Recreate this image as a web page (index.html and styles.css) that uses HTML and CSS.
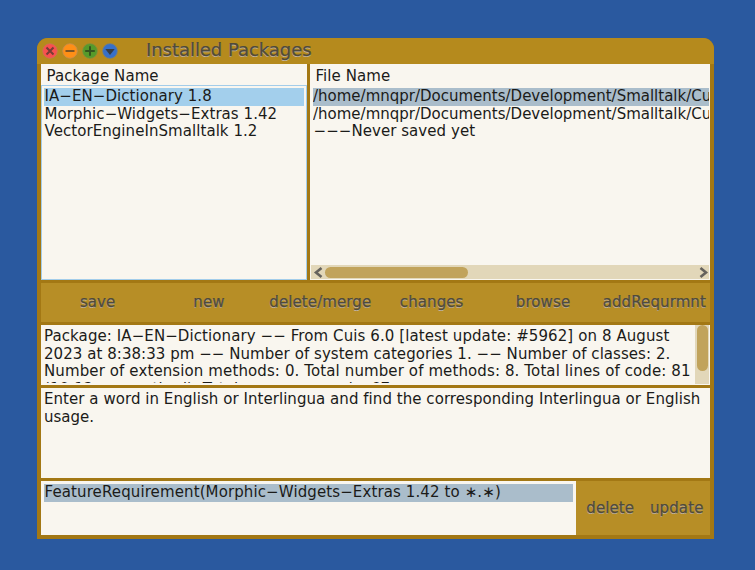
FILE: index.html
```html
<!DOCTYPE html>
<html lang="en">
<head>
<meta charset="utf-8">
<title>Installed Packages</title>
<link rel="stylesheet" href="styles.css">
</head>
<body>
<main class="window">
  <header class="titlebar">
    <div class="controls">
      <svg viewBox="0 0 16 16"><circle cx="8" cy="8" r="7.3" fill="#f9504f" stroke="#c47a50" stroke-width=".8"/><path d="M4.500 4.500l7 7M11.500 4.500l-7 7" stroke="#773c35" stroke-width="2"/></svg>
      <svg viewBox="0 0 16 16"><circle cx="8" cy="8" r="7.300" fill="#ff8f16" stroke="#c48e50" stroke-width=".8"/><path d="M3.500 8h9" stroke="#7c5425" stroke-width="2"/></svg>
      <svg viewBox="0 0 16 16"><circle cx="8" cy="8" r="7.300" fill="#559a2a" stroke="#7b9040" stroke-width=".8"/><path d="M3.200 8h9.600M8 3.200v9.600" stroke="#34551f" stroke-width="2"/></svg>
      <svg viewBox="0 0 16 16"><circle cx="8" cy="8" r="7.300" fill="#3770c8" stroke="#6b7e90" stroke-width=".8"/><path d="M3.300 6h9.400L8 12z" fill="#343d49"/></svg>
    </div>
    <h1 class="title">Installed Packages</h1>
  </header>
  <section class="lists">
    <div class="column names">
      <h2 class="heading">Package Name</h2>
      <div class="rows framed">
        <div class="row active">IA−EN−Dictionary 1.8</div>
        <div class="row">Morphic−Widgets−Extras 1.42</div>
        <div class="row">VectorEngineInSmalltalk 1.2</div>
      </div>
    </div>
    <div class="column files">
      <h2 class="heading">File Name</h2>
      <div class="rows">
        <div class="row selected path">/home/mnqpr/Documents/Development/Smalltalk/Cu</div>
        <div class="row path">/home/mnqpr/Documents/Development/Smalltalk/Cu</div>
        <div class="row">−−−Never saved yet</div>
      </div>
      <div class="hscroll">
        <svg class="arrow" viewBox="0 0 14 14"><path d="M10.500 3L5 7.500l5.500 4.500" /></svg>
        <div class="hthumb"></div>
        <svg class="arrow end" viewBox="0 0 14 14"><path d="M5.500 3L11 7.500l-5.500 4.500" /></svg>
      </div>
    </div>
  </section>
  <nav class="buttons">
    <span>save</span><span>new</span><span>delete/merge</span><span>changes</span><span>browse</span><span>addRequrmnt</span>
  </nav>
  <section class="summary">
    <div class="text">
      <div class="medium">Package: IA−EN−Dictionary −− From Cuis 6.0 [latest update: #5962] on 8 August</div>
      <div class="tight">2023 at 8:38:33 pm −− Number of system categories 1. −− Number of classes: 2.</div>
      <div class="wide">Number of extension methods: 0. Total number of methods: 8. Total lines of code: 81</div>
      <div class="wide">(10.12 per method). Total message sends: 67</div>
    </div>
    <div class="vscroll"><div class="vthumb"></div></div>
  </section>
  <section class="description text">
    <div class="tight">Enter a word in English or Interlingua and find the corresponding Interlingua or English</div>
    <div>usage.</div>
  </section>
  <section class="footer">
    <div class="requirements"><div class="row selected wide">FeatureRequirement(Morphic−Widgets−Extras 1.42 to ∗.∗)</div></div>
    <div class="actions"><span>delete</span><span>update</span></div>
  </section>
</main>
</body>
</html>
```

FILE: styles.css
```css
* { box-sizing: border-box; }
body {
  margin: 0;
  height: 570px;
  padding: 38px 41px 0 37px;
  background: #2a599f;
  color: #1b1b19;
  font-family: "DejaVu Sans", sans-serif;
  font-size: 15px;
  font-variant-ligatures: none;
  overflow: hidden;
}
.window {
  width: 677px;
  height: 501px;
  display: flex;
  flex-direction: column;
  gap: 3px;
  padding: 0 4px 4px;
  background: #a37814;
  border-radius: 11px 11px 0 0;
  overflow: hidden;
}
.titlebar {
  height: 26px;
  margin: 0 -4px -3px;
  display: flex;
  flex: none;
  align-items: center;
  background: #b58a1d;
}
.controls { display: flex; gap: 4px; padding-left: 5px; }
.controls svg { width: 16px; height: 16px; display: block; }
.title {
  margin: -2px 0 0 28px;
  font-size: 18px;
  font-weight: 400;
  line-height: 24px;
  letter-spacing: -0.05px;
  white-space: nowrap;
}
.title, .buttons, .actions {
  color: #4f4a3c;
  -webkit-text-stroke: 0.25px #4f4a3c;
  text-shadow: 0 1px 0 #c4b6a0;
}
.lists { display: flex; gap: 3px; height: 216px; flex: none; }
.column { display: flex; flex-direction: column; background: #f9f6ef; overflow: hidden; }
.names { width: 266px; }
.files { width: 400px; padding-right: 1px; }
.heading {
  margin: 0;
  padding-left: 5.5px;
  height: 21px;
  flex: none;
  font-size: 15px;
  font-weight: 400;
  line-height: 24px;
  letter-spacing: 0.08px;
}
.rows { flex: 1; padding: 3px 3px 0 3px; }
.files .rows { padding: 3px 0 0 3px; }
.framed { border: 1px solid #a3cdea; padding: 2px 2px 0; }
.row { height: 17.6px; line-height: 17px; white-space: nowrap; overflow: hidden; padding-left: 0.5px; letter-spacing: 0.06px; }
.files .path { padding-left: 0; letter-spacing: 0; }
.active { background: #a3cfec; }
.selected { background: #aabdcb; }
.hscroll { display: flex; height: 14px; margin: 0 0 1px 1px; background: #e2d7b9; }
.arrow { width: 14px; height: 14px; flex: none; }
.arrow path { fill: none; stroke: #65625d; stroke-width: 2.6; }
.end { margin-left: auto; }
.hthumb { width: 143px; height: 11px; margin-top: 2px; border-radius: 6px; background: #c1a35b; }
.buttons {
  display: grid;
  grid-template-columns: repeat(6, 1fr);
  height: 39px;
  flex: none;
  background: #b78e26;
  line-height: 38px;
  text-align: center;
  letter-spacing: 0.1px;
  padding-left: 1px;
}
.summary { display: flex; height: 60px; flex: none; background: #f9f6ef; overflow: hidden; }
.text { padding: 3px 0 0 3px; line-height: 17.6px; white-space: nowrap; overflow: hidden; }
.tight { letter-spacing: 0.05px; }
.medium { letter-spacing: 0.09px; }
.wide, .requirements .wide { letter-spacing: 0.11px; }
.summary .text { width: 654px; height: 58px; }
.vscroll { width: 14px; height: 59px; background: #e2d7b9; padding-left: 2px; }
.vthumb { width: 11px; height: 46px; border-radius: 6px; background: #c1a35b; }
.description { height: 90px; flex: none; background: #f9f6ef; }
.footer { display: flex; height: 54px; flex: none; }
.requirements { width: 535px; padding: 3px; background: #f9f6ef; }
.actions {
  width: 134px;
  display: grid;
  grid-template-columns: 1fr 1fr;
  background: #b78e26;
  line-height: 54px;
  text-align: center;
  letter-spacing: 0.1px;
  padding-left: 1px;
}
```
